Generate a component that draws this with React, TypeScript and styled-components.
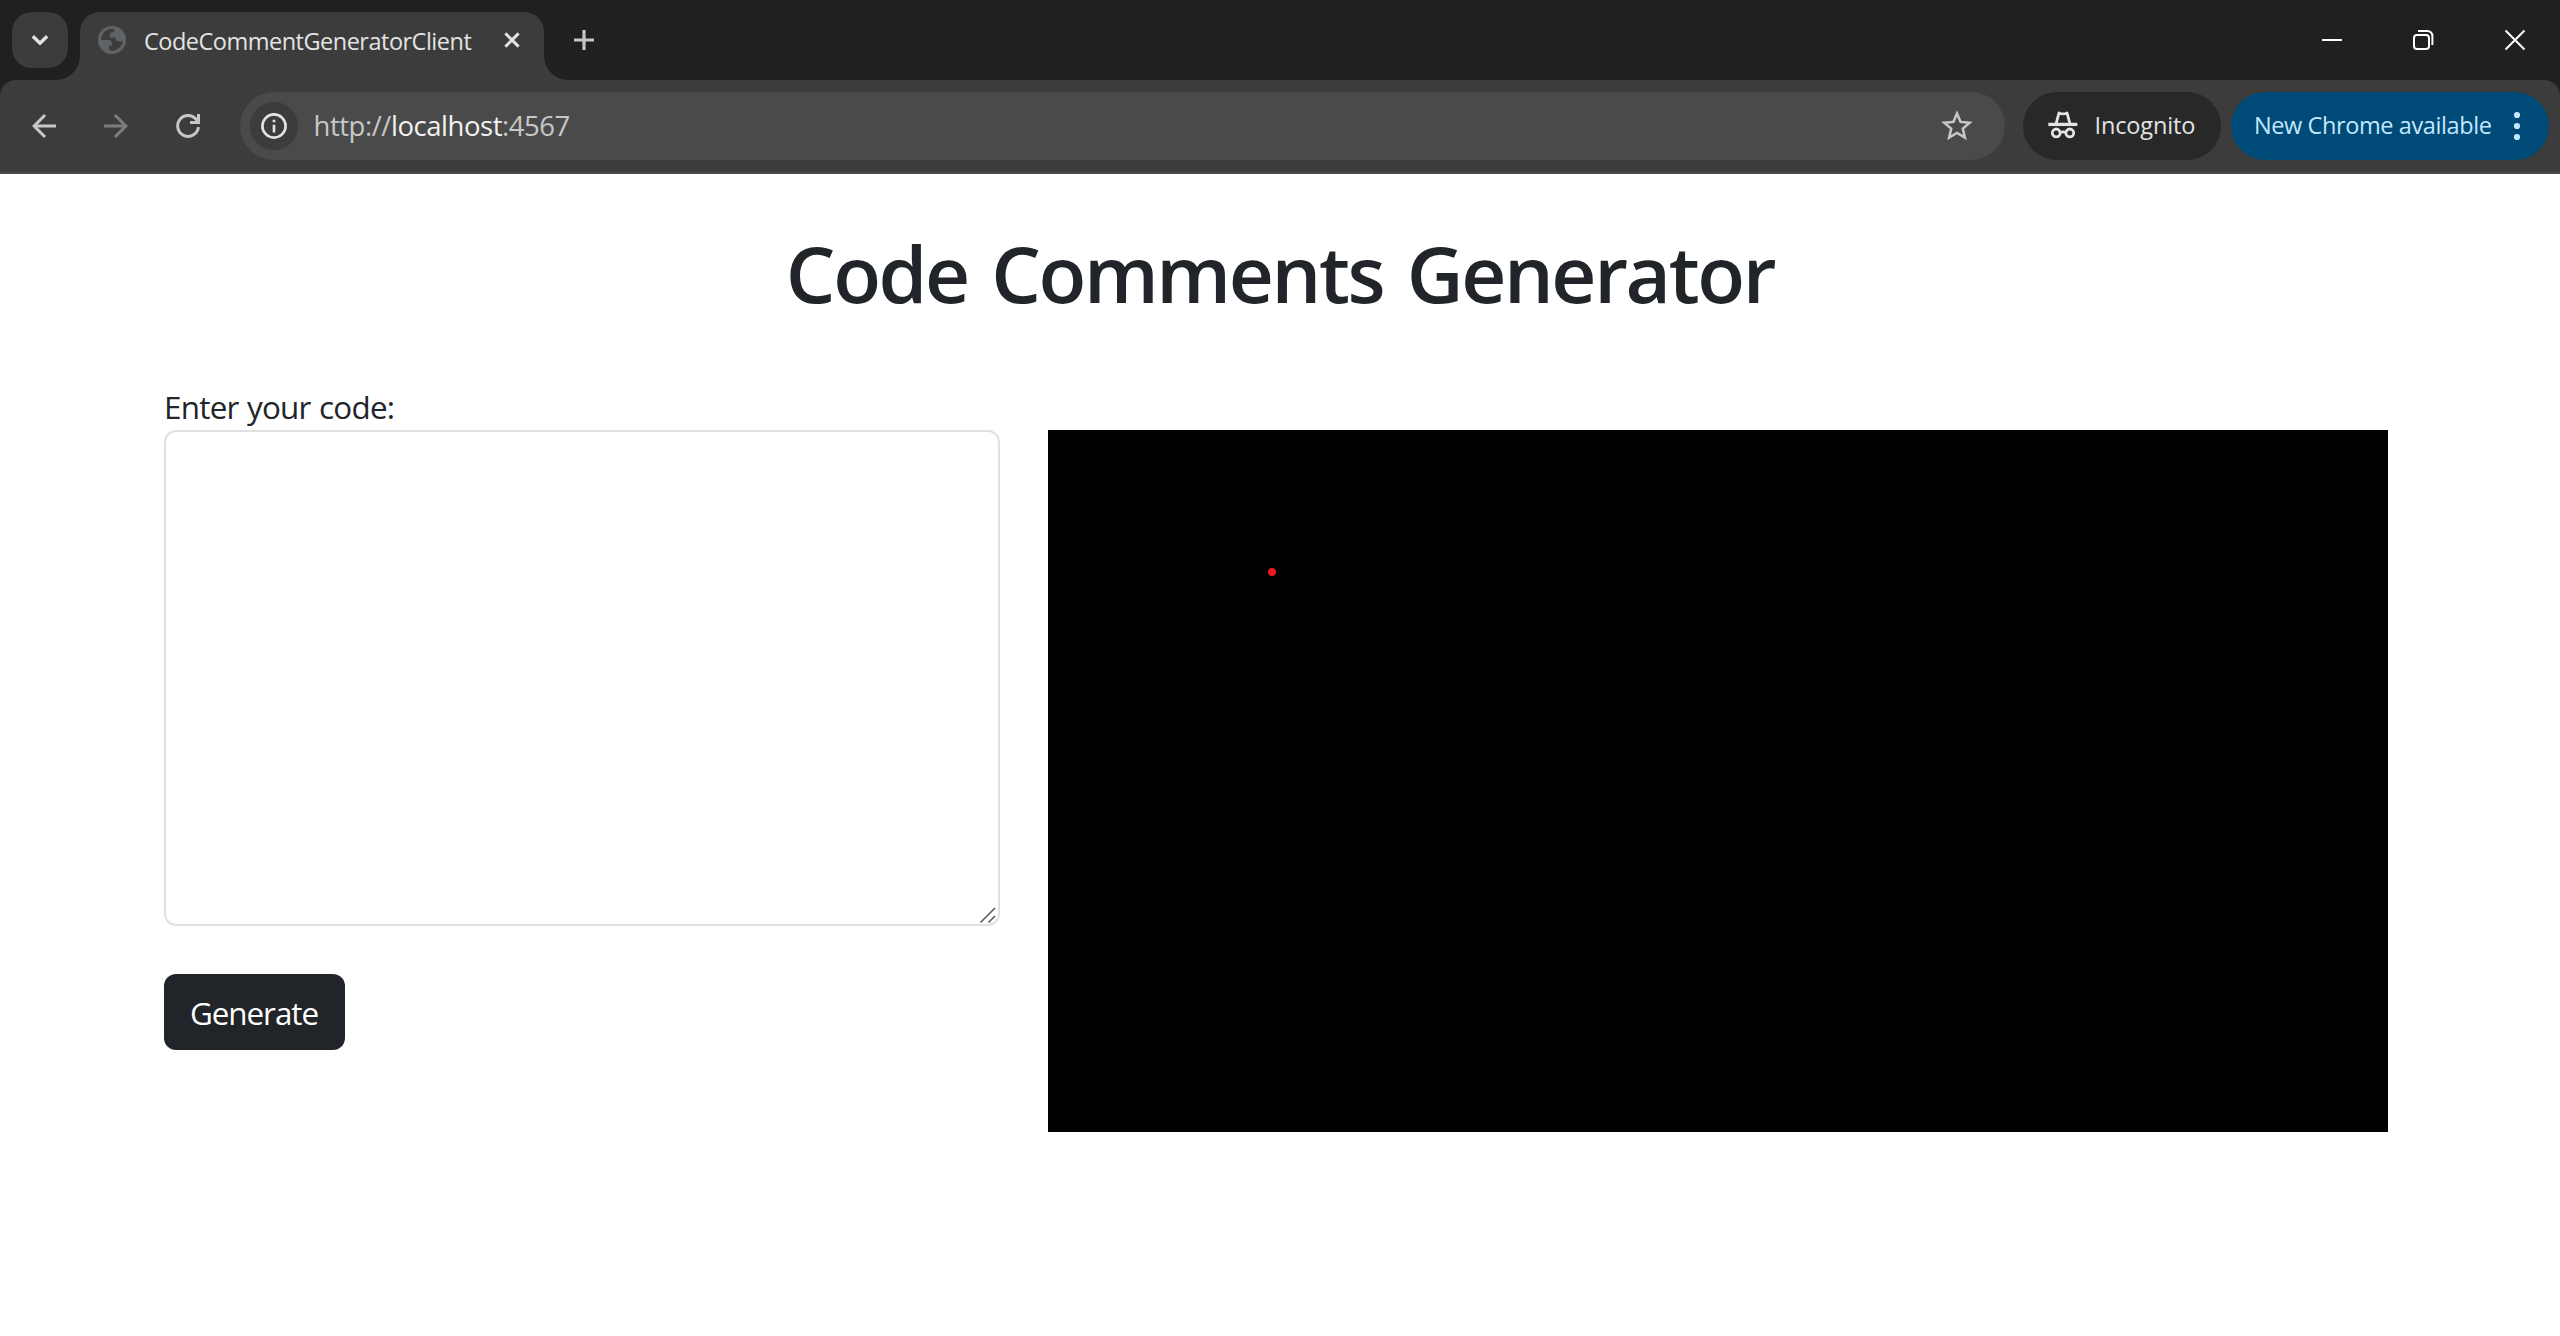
import React from 'react';
import styled, { createGlobalStyle } from 'styled-components';

const GlobalStyle = createGlobalStyle`
  *, *::before, *::after { box-sizing: border-box; }
  body {
    margin: 0;
    background: #fff;
    color: #212529;
    font-family: "Open Sans", "Noto Sans", sans-serif;
  }
  button, textarea { font-family: inherit; }
`;

const Window = styled.div`
  display: flex;
  flex-direction: column;
  width: 2560px;
  height: 1336px;
  overflow: hidden;
  background: #fff;
`;

const TabStrip = styled.div`
  display: flex;
  align-items: flex-start;
  height: 80px;
  padding-left: 12px;
  background: #1f2120;
`;

const TabSearch = styled.button`
  display: flex;
  align-items: center;
  justify-content: center;
  width: 56px;
  height: 56px;
  margin: 12px 12px 0 0;
  padding: 0;
  border: 0;
  border-radius: 20px;
  background: #3c3c3c;
`;

const Tab = styled.div`
  position: relative;
  display: flex;
  align-items: center;
  width: 464px;
  height: 68px;
  margin-top: 12px;
  padding: 0 24px 12px 18px;
  border-radius: 20px 20px 0 0;
  background: #3c3c3c;

  &::before, &::after {
    content: "";
    position: absolute;
    bottom: 0;
    width: 24px;
    height: 24px;
  }
  &::before {
    left: -24px;
    background: radial-gradient(circle at 0 0, transparent 23.5px, #3c3c3c 24.3px);
  }
  &::after {
    right: -24px;
    background: radial-gradient(circle at 100% 0, transparent 23.5px, #3c3c3c 24.3px);
  }
`;

const TabTitle = styled.span`
  flex: 1;
  padding: 2px 0 0 18px;
  color: #e3e3e3;
  font-size: 23.5px;
  letter-spacing: -0.5px;
  line-height: 32px;
  white-space: nowrap;
`;

const NewTab = styled.div`
  display: flex;
  margin: 28px 0 0 28px;
`;

const WindowControls = styled.div`
  display: flex;
  align-items: center;
  gap: 68px;
  height: 80px;
  margin-left: auto;
  padding-right: 33px;
`;

const ToolbarBack = styled.div`
  background: #1f2120;
`;

const Toolbar = styled.div`
  display: flex;
  align-items: flex-start;
  height: 94px;
  padding: 12px 11px 0 26px;
  border-bottom: 2px solid #4b494a;
  border-radius: 16px 16px 0 0;
  background: #3c3c3c;
`;

const NavButtons = styled.div`
  display: flex;
  align-items: center;
  gap: 36px;
  width: 214px;
  height: 68px;
`;

const AddressBar = styled.div`
  display: flex;
  align-items: center;
  width: 1765px;
  height: 68px;
  padding: 0 29px 0 10px;
  border-radius: 34px;
  background: #4a4a4a;
`;

const SiteInfo = styled.span`
  display: flex;
  align-items: center;
  justify-content: center;
  width: 48px;
  height: 48px;
  border-radius: 50%;
  background: #3c3c3c;
`;

const Url = styled.span`
  flex: 1;
  padding-left: 15.5px;
  color: #c7c7c7;
  font-size: 27.5px;
  letter-spacing: -0.46px;
  line-height: 38px;
  white-space: nowrap;
`;

const Host = styled.span`
  color: #f1f1f1;
`;

const Pill = styled.div<{ $kind: 'incognito' | 'update' }>`
  display: flex;
  align-items: center;
  width: ${(p) => (p.$kind === 'update' ? 318 : 198)}px;
  height: 68px;
  margin-left: ${(p) => (p.$kind === 'update' ? 10 : 18)}px;
  padding-left: ${(p) => (p.$kind === 'update' ? 23 : 24)}px;
  border-radius: 34px;
  background: ${(p) => (p.$kind === 'update' ? '#004a77' : '#282828')};
  color: ${(p) => (p.$kind === 'update' ? '#c2e7ff' : '#e3e3e3')};
  font-size: 23.5px;
  letter-spacing: ${(p) => (p.$kind === 'update' ? -0.4 : -0.15)}px;
  line-height: 32px;
  white-space: nowrap;
`;

const PillLabel = styled.span<{ $width: number }>`
  width: ${(p) => p.$width}px;
  margin-top: -2px;
`;

const IncognitoMark = styled.span`
  display: flex;
  margin-right: 15.5px;
`;

const Page = styled.main`
  flex: 1;
  display: flex;
  flex-direction: column;
  padding: 0 172px 0 164px;
`;

const Heading = styled.h1`
  margin: 51px -8px 0 0;
  font-size: 78.4px;
  font-weight: 600;
  letter-spacing: -2.4px;
  word-spacing: 5.5px;
  line-height: 96px;
  text-align: center;
`;

const Columns = styled.div`
  display: flex;
  gap: 48px;
  margin-top: 61px;
`;

const InputColumn = styled.div`
  display: flex;
  flex-direction: column;
  align-items: flex-start;
  width: 836px;
`;

const Label = styled.label`
  height: 48px;
  padding-top: 1px;
  font-size: 31.4px;
  letter-spacing: -0.75px;
  word-spacing: 1px;
  line-height: 48px;
`;

const EditorFrame = styled.div`
  position: relative;
  width: 836px;
  height: 496px;
`;

const CodeInput = styled.textarea`
  display: block;
  width: 100%;
  height: 100%;
  padding: 12px 24px;
  border: 2px solid #dee2e6;
  border-radius: 12px;
  background: #fff;
  font-size: 32px;
  resize: none;
  outline: 0;
`;

const ResizeGrip = styled.svg`
  position: absolute;
  right: 3px;
  bottom: 2px;
`;

const GenerateButton = styled.button`
  width: 181px;
  height: 76px;
  margin-top: 48px;
  padding: 1px 1px 0 0;
  border: 0;
  border-radius: 12px;
  background: #212529;
  color: #fff;
  font-size: 31.4px;
  letter-spacing: -1.04px;
  line-height: 48px;
`;

const Output = styled.div`
  width: 1340px;
  height: 702px;
  margin-top: 48px;
  padding: 138px 0 0 220px;
  background: #000;
`;

const Dot = styled.div`
  width: 8px;
  height: 8px;
  border-radius: 50%;
  background: #e81c1c;
`;

export default function App() {
  return (
    <Window>
      <GlobalStyle />
      <TabStrip>
        <TabSearch aria-label="Search tabs">
          <svg width="20" height="12" viewBox="0 0 20 12" fill="none" stroke="#e3e3e3" strokeWidth="3.4">
            <path d="M2.8 2.2 10 9.2 17.2 2.2" />
          </svg>
        </TabSearch>
        <Tab>
          <svg width="28" height="28" viewBox="0 0 28 28">
            <circle cx="14" cy="14" r="14" fill="#5f6368" />
            <path
              d="M3.2 14H10.4C13 14 14.2 15.6 14.2 18.1V19.4H11.2V24.3A10.9 10.9 0 0 0 24.9 14.4C24 15.2 22.7 15.4 21.4 15.4C18.7 15.4 17.4 14.3 17.4 11.6H11.9V9.4C11.9 7.4 13 6.2 14.9 6.2H16V5.2C16 4.3 16.3 3.6 16.8 3.1A11 11 0 0 0 3.2 14Z"
              fill="#3c3c3c"
            />
          </svg>
          <TabTitle>CodeCommentGeneratorClient</TabTitle>
          <svg width="16" height="16" viewBox="0 0 16 16" stroke="#e3e3e3" strokeWidth="3">
            <path d="M1.4 1.4 14.6 14.6M14.6 1.4 1.4 14.6" />
          </svg>
        </Tab>
        <NewTab>
          <svg width="24" height="24" viewBox="0 0 24 24" stroke="#c7c7c7" strokeWidth="3.2">
            <path d="M2 12H22M12 2V22" />
          </svg>
        </NewTab>
        <WindowControls>
          <svg width="24" height="24" viewBox="0 0 24 24" stroke="#fff" strokeWidth="2">
            <path d="M3 12H23" />
          </svg>
          <svg width="24" height="24" viewBox="0 0 24 24" fill="none" stroke="#fff" strokeWidth="2">
            <rect x="3" y="7" width="15" height="14" rx="3" />
            <path d="M7 3H16A5 5 0 0 1 21.4 8V17" />
          </svg>
          <svg width="24" height="24" viewBox="0 0 24 24" stroke="#fff" strokeWidth="2">
            <path d="M2.5 2.5 21.5 21.5M21.5 2.5 2.5 21.5" />
          </svg>
        </WindowControls>
      </TabStrip>
      <ToolbarBack>
        <Toolbar>
          <NavButtons>
            <svg width="36" height="36" viewBox="0 0 24 24" fill="#c7c7c7">
              <path d="M20 11H7.83l5.59-5.59L12 4l-8 8 8 8 1.41-1.41L7.83 13H20v-2z" />
            </svg>
            <svg width="36" height="36" viewBox="0 0 24 24" fill="#7d7d7d">
              <path d="M12 4l-1.41 1.41L16.17 11H4v2h12.17l-5.58 5.59L12 20l8-8-8-8z" />
            </svg>
            <svg width="36" height="36" viewBox="0 0 36 36" fill="none" stroke="#c7c7c7" strokeWidth="3">
              <path d="M28.4 19.1A10.4 10.4 0 1 1 25.6 10.8L28.5 14.2" />
              <path d="M28.5 6V14.5H20" />
            </svg>
          </NavButtons>
          <AddressBar>
            <SiteInfo>
              <svg width="26" height="26" viewBox="0 0 26 26" fill="none" stroke="#e3e3e3" strokeWidth="2.6">
                <circle cx="13" cy="13" r="11.6" />
                <path d="M13 11.7V19.5M13 6.8V9.3" />
              </svg>
            </SiteInfo>
            <Url>
              http://<Host>localhost</Host>:4567
            </Url>
            <svg width="38" height="38" viewBox="0 0 24 24" fill="#c7c7c7">
              <path d="M22 9.24l-7.19-.62L12 2 9.19 8.63 2 9.24l5.46 4.73L5.82 21 12 17.27 18.18 21l-1.63-7.03L22 9.24zM12 15.4l-3.76 2.27 1-4.28-3.32-2.88 4.38-.38L12 6.1l1.71 4.04 4.38.38-3.32 2.88 1 4.28L12 15.4z" />
            </svg>
          </AddressBar>
          <Pill $kind="incognito">
            <IncognitoMark>
              <svg width="32" height="30" viewBox="0 0 32 30" fill="none" stroke="#e3e3e3" strokeWidth="2.8">
                <path d="M1.3 13.4H30.3" strokeWidth="3.3" />
                <path d="M9 13 12 1.9Q14 2.9 16 2.9Q18 2.9 20 1.9L23 13" strokeLinejoin="round" />
                <circle cx="9.2" cy="21.9" r="3.9" />
                <circle cx="22.8" cy="21.9" r="3.9" />
                <path d="M13 21.5Q16 20.2 19 21.5" />
              </svg>
            </IncognitoMark>
            <PillLabel $width={110}>Incognito</PillLabel>
          </Pill>
          <Pill $kind="update">
            <PillLabel $width={257}>New Chrome available</PillLabel>
            <svg width="12" height="30" viewBox="0 0 12 30" fill="#c2e7ff">
              <circle cx="6" cy="4" r="3.1" />
              <circle cx="6" cy="15" r="3.1" />
              <circle cx="6" cy="26" r="3.1" />
            </svg>
          </Pill>
        </Toolbar>
      </ToolbarBack>
      <Page>
        <Heading>Code Comments Generator</Heading>
        <Columns>
          <InputColumn>
            <Label htmlFor="code">Enter your code:</Label>
            <EditorFrame>
              <CodeInput id="code" />
              <ResizeGrip width="18" height="18" viewBox="0 0 18 18" stroke="#555" strokeWidth="1.5">
                <path d="M1.5 16.5 16 2M9.5 16.5 16 10" />
              </ResizeGrip>
            </EditorFrame>
            <GenerateButton>Generate</GenerateButton>
          </InputColumn>
          <Output>
            <Dot />
          </Output>
        </Columns>
      </Page>
    </Window>
  );
}
